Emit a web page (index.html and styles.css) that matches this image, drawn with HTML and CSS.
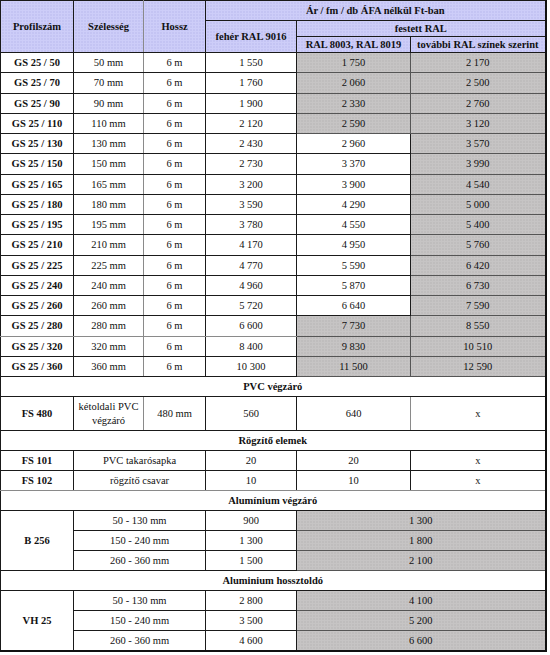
FILE: index.html
```html
<!DOCTYPE html>
<html lang="hu">
<head>
<meta charset="utf-8">
<title>Árlista</title>
<link rel="stylesheet" href="styles.css">
</head>
<body>
<table class="price">
  <colgroup>
    <col class="c1"><col class="c2"><col class="c3"><col class="c4"><col class="c5"><col class="c6">
  </colgroup>
  <thead>
    <tr class="h1">
      <th class="hd" rowspan="3">Profilszám</th>
      <th class="hd soft-r" rowspan="3">Szélesség</th>
      <th class="hd" rowspan="3">Hossz</th>
      <th class="hd" colspan="3">Ár / fm / db ÁFA nélkül Ft-ban</th>
    </tr>
    <tr class="h2">
      <th class="hd" rowspan="2">fehér RAL 9016</th>
      <th class="hd" colspan="2">festett RAL</th>
    </tr>
    <tr class="h3">
      <th class="hd">RAL 8003, RAL 8019</th>
      <th class="hd">további RAL színek szerint</th>
    </tr>
  </thead>
  <tbody>
    <tr class="r"><td class="b">GS 25 / 50</td><td class="soft-r">50 mm</td><td>6 m</td><td>1 550</td><td class="g">1 750</td><td class="g">2 170</td></tr>
    <tr class="r"><td class="b">GS 25 / 70</td><td class="soft-r">70 mm</td><td>6 m</td><td>1 760</td><td class="g">2 060</td><td class="g">2 500</td></tr>
    <tr class="r"><td class="b">GS 25 / 90</td><td class="soft-r">90 mm</td><td>6 m</td><td>1 900</td><td class="g">2 330</td><td class="g">2 760</td></tr>
    <tr class="r"><td class="b">GS 25 / 110</td><td class="soft-r">110 mm</td><td>6 m</td><td>2 120</td><td class="g">2 590</td><td class="g">3 120</td></tr>
    <tr class="r"><td class="b">GS 25 / 130</td><td class="soft-r">130 mm</td><td>6 m</td><td>2 430</td><td>2 960</td><td class="g">3 570</td></tr>
    <tr class="r"><td class="b">GS 25 / 150</td><td class="soft-r">150 mm</td><td>6 m</td><td>2 730</td><td>3 370</td><td class="g">3 990</td></tr>
    <tr class="r"><td class="b">GS 25 / 165</td><td class="soft-r">165 mm</td><td>6 m</td><td>3 200</td><td>3 900</td><td class="g">4 540</td></tr>
    <tr class="r"><td class="b">GS 25 / 180</td><td class="soft-r">180 mm</td><td>6 m</td><td>3 590</td><td>4 290</td><td class="g">5 000</td></tr>
    <tr class="r"><td class="b">GS 25 / 195</td><td class="soft-r">195 mm</td><td>6 m</td><td>3 780</td><td>4 550</td><td class="g">5 400</td></tr>
    <tr class="r"><td class="b">GS 25 / 210</td><td class="soft-r">210 mm</td><td>6 m</td><td>4 170</td><td>4 950</td><td class="g">5 760</td></tr>
    <tr class="r"><td class="b">GS 25 / 225</td><td class="soft-r">225 mm</td><td>6 m</td><td>4 770</td><td>5 590</td><td class="g">6 420</td></tr>
    <tr class="r"><td class="b">GS 25 / 240</td><td class="soft-r">240 mm</td><td>6 m</td><td>4 960</td><td>5 870</td><td class="g">6 730</td></tr>
    <tr class="r"><td class="b">GS 25 / 260</td><td class="soft-r">260 mm</td><td>6 m</td><td>5 720</td><td>6 640</td><td class="g">7 590</td></tr>
    <tr class="r soft-b"><td class="b">GS 25 / 280</td><td class="soft-r">280 mm</td><td>6 m</td><td>6 600</td><td class="g">7 730</td><td class="g">8 550</td></tr>
    <tr class="r"><td class="b">GS 25 / 320</td><td class="soft-r">320 mm</td><td>6 m</td><td>8 400</td><td class="g">9 830</td><td class="g">10 510</td></tr>
    <tr class="r"><td class="b">GS 25 / 360</td><td class="soft-r">360 mm</td><td>6 m</td><td>10 300</td><td class="g">11 500</td><td class="g">12 590</td></tr>

    <tr class="sec"><td class="b" colspan="6">PVC végzáró</td></tr>
    <tr class="tall"><td class="b">FS 480</td><td class="soft-r wrap">kétoldali PVC végzáró</td><td>480 mm</td><td>560</td><td class="soft-r">640</td><td>x</td></tr>

    <tr class="sec"><td class="b" colspan="6">Rögzítő elemek</td></tr>
    <tr class="r2"><td class="b">FS 101</td><td colspan="2">PVC takarósapka</td><td>20</td><td>20</td><td>x</td></tr>
    <tr class="r2 soft-b"><td class="b">FS 102</td><td colspan="2">rögzítő csavar</td><td>10</td><td>10</td><td>x</td></tr>

    <tr class="sec"><td class="b" colspan="6">Alumínium végzáró</td></tr>
    <tr class="r2"><td class="b" rowspan="3">B 256</td><td colspan="2">50 - 130 mm</td><td>900</td><td class="g" colspan="2">1 300</td></tr>
    <tr class="r2"><td colspan="2">150 - 240 mm</td><td>1 300</td><td class="g" colspan="2">1 800</td></tr>
    <tr class="r2"><td colspan="2">260 - 360 mm</td><td>1 500</td><td class="g" colspan="2">2 100</td></tr>

    <tr class="sec"><td class="b" colspan="6">Aluminium hossztoldó</td></tr>
    <tr class="r2"><td class="b" rowspan="3">VH 25</td><td class="nob" colspan="2">50 - 130 mm</td><td>2 800</td><td class="g" colspan="2">4 100</td></tr>
    <tr class="r2"><td class="nob" colspan="2">150 - 240 mm</td><td>3 500</td><td class="g" colspan="2">5 200</td></tr>
    <tr class="r2 last"><td colspan="2">260 - 360 mm</td><td>4 600</td><td class="g" colspan="2">6 600</td></tr>
  </tbody>
</table>
</body>
</html>
```

FILE: styles.css
```css
html, body {
  margin: 0;
  padding: 0;
  background: #ffffff;
}

.price {
  border-collapse: collapse;
  table-layout: fixed;
  width: 545px;
  font-family: "Liberation Serif", "Times New Roman", serif;
  font-size: 10.5px;
  color: #111;
  border-left: 1px solid #222;
  border-right: 2px solid #111;
  border-top: 1px solid #555;
  border-bottom: 2px solid #111;
}

.c1 { width: 73px; }
.c2 { width: 70px; }
.c3 { width: 62px; }
.c4 { width: 91px; }
.c5 { width: 114px; }
.c6 { width: 135px; }

.price th,
.price td {
  border: 1px solid #1a1a1a;
  padding: 0 2px;
  text-align: center;
  vertical-align: middle;
  line-height: 13px;
  white-space: nowrap;
  overflow: hidden;
}

.price th {
  font-weight: bold;
}

.hd {
  background-color: #cdcdf8;
  background-image: radial-gradient(circle, #a9a9e2 0.6px, transparent 0.9px);
  background-size: 3px 3px;
}

.h1 { height: 20px; }
.h2 { height: 16px; }
.h3 { height: 16px; }

.r { height: 20.25px; }
.r2 { height: 20px; }
.sec { height: 20px; }
.tall { height: 34px; }

.b { font-weight: bold; }

.g {
  background-color: #c6c4c4;
  background-image: radial-gradient(circle, #a8a6a6 0.6px, transparent 0.9px);
  background-size: 3px 3px;
  border-color: #555 !important;
}

.price td.soft-r,
.price th.soft-r {
  border-right-color: #8a8a8a;
}

.soft-b td {
  border-bottom-color: #8a8a8a;
}

.wrap {
  white-space: normal !important;
  line-height: 14px !important;
}

.price td.nob {
  border-bottom: none;
}
```
